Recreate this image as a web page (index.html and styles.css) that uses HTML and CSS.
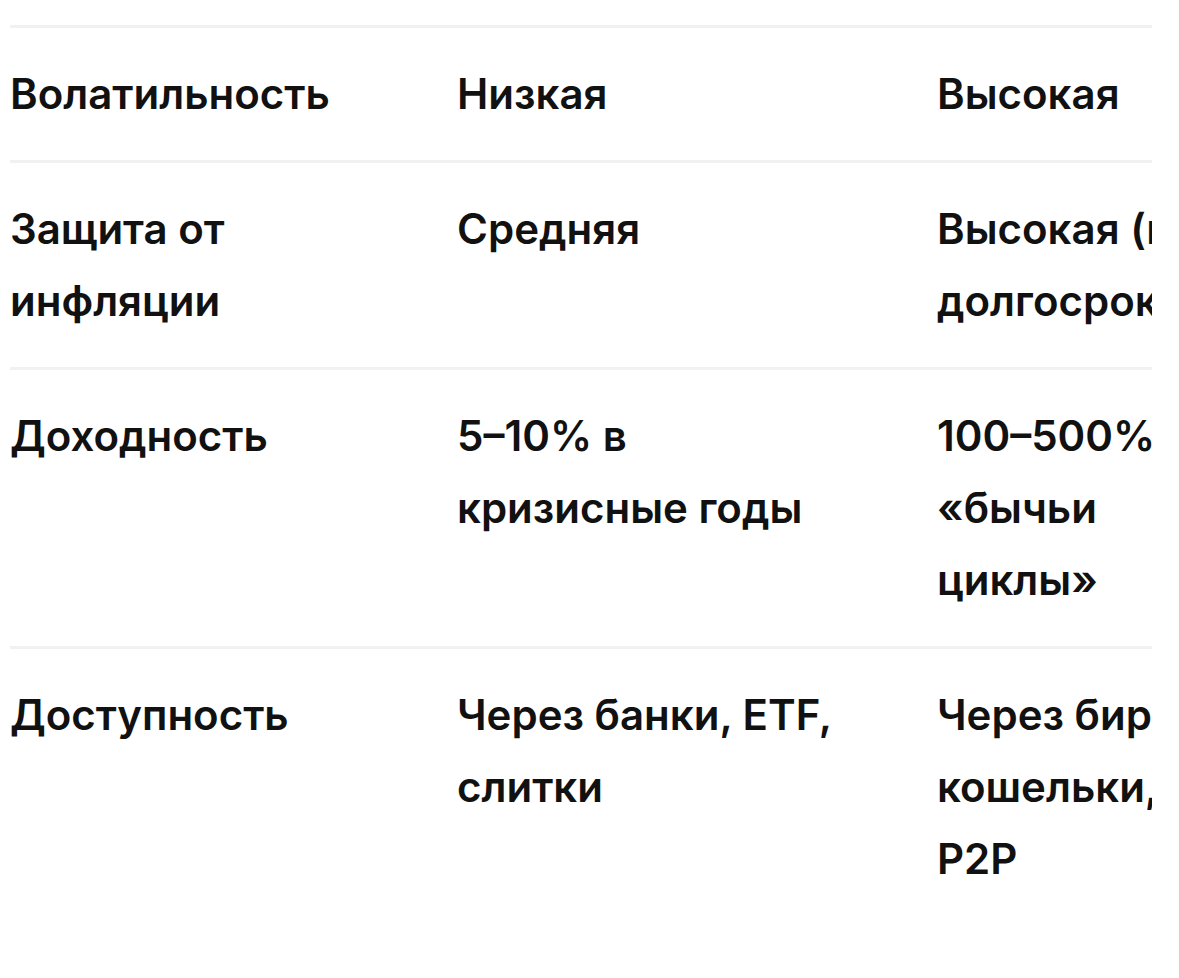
FILE: index.html
```html
<!DOCTYPE html>
<html lang="ru">
<head>
<meta charset="utf-8">
<link rel="stylesheet" href="styles.css">
</head>
<body>
<div class="wrap">
  <table class="cmp">
    <colgroup>
      <col class="c1"><col class="c2"><col class="c3">
    </colgroup>
    <tbody>
      <tr><td>Волатильность</td><td>Низкая</td><td>Высокая</td></tr>
      <tr><td>Защита от инфляции</td><td>Средняя</td><td>Высокая (на долгосрок)</td></tr>
      <tr><td>Доходность</td><td>5–10% в кризисные годы</td><td>100–500% в «бычьи циклы»</td></tr>
      <tr><td>Доступность</td><td>Через банки, ETF, слитки</td><td>Через биржи, кошельки, P2P</td></tr>
    </tbody>
  </table>
</div>
</body>
</html>
```
FILE: styles.css
```css
html, body { margin: 0; padding: 0; background: #fff; }
body { font-family: Inter, "Noto Sans", sans-serif; color: #111; }
.wrap { margin: 25px 0 0 10px; width: 1142px; overflow: hidden; }
.cmp { border-collapse: collapse; table-layout: fixed; width: 1336px; }
.c1 { width: 447px; }
.c2 { width: 480px; }
.c3 { width: 409px; }
.cmp tr { border-top: 3px solid #f1f1f1; }
.cmp td { padding: 30px 90px 30px 0; font-size: 42px; font-weight: 600; line-height: 72px; vertical-align: top; }
.cmp td:nth-child(3) { padding-right: 110px; }
```
